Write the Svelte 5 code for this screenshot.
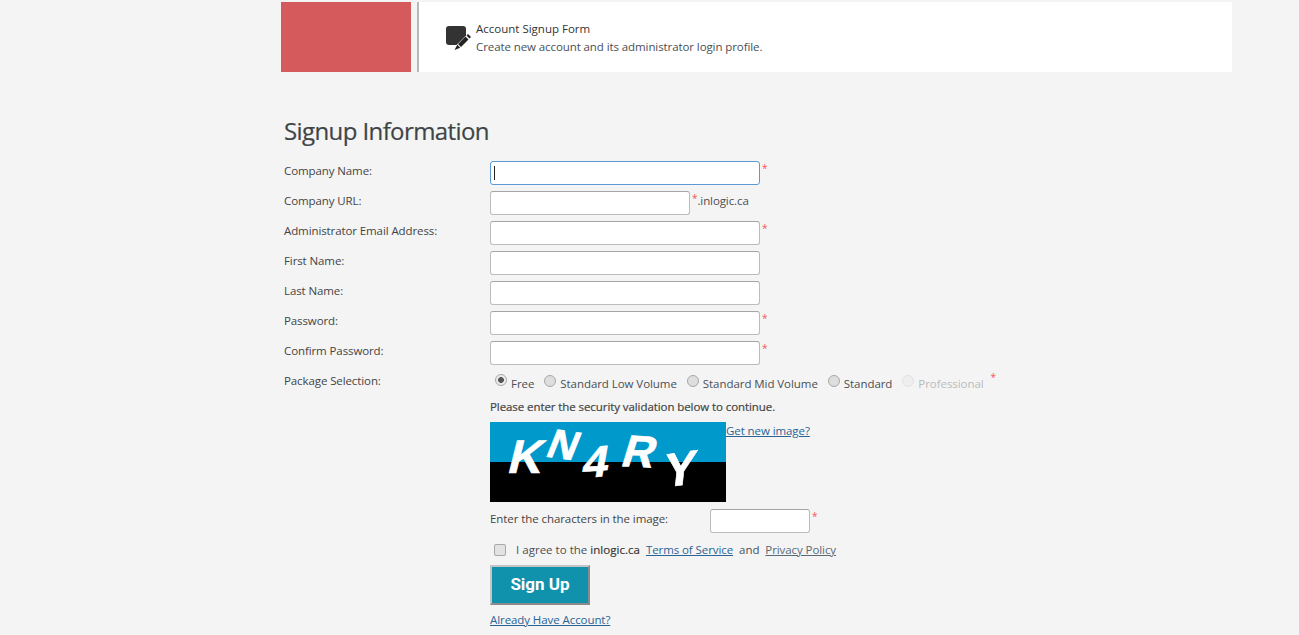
<script lang="ts">
  const fields = [
    { label: 'Company Name:', required: true, focus: true },
    { label: 'Company URL:', required: true, short: true, suffix: '.inlogic.ca' },
    { label: 'Administrator Email Address:', required: true },
    { label: 'First Name:' },
    { label: 'Last Name:' },
    { label: 'Password:', required: true, type: 'password' },
    { label: 'Confirm Password:', required: true, type: 'password' }
  ]

  const packages = [
    { name: 'Free', checked: true },
    { name: 'Standard Low Volume' },
    { name: 'Standard Mid Volume' },
    { name: 'Standard' },
    { name: 'Professional', disabled: true }
  ]

  const captcha = [
    { ch: 'K', x: 20, y: 11, size: 47, rot: 0, sx: 1 },
    { ch: 'N', x: 59, y: 3, size: 41, rot: 8, sx: 1 },
    { ch: '4', x: 94, y: 18, size: 44, rot: -4, sx: 1.05 },
    { ch: 'R', x: 134, y: 7, size: 45, rot: 3, sx: 1 },
    { ch: 'Y', x: 175, y: 23, size: 47, rot: -8, sx: 1.05 }
  ]
</script>

<div class="page">
  <header class="banner">
    <div class="logo"></div>
    <div class="title-box">
      <svg class="icon" width="26" height="26" viewBox="0 0 26 26" aria-hidden="true">
        <path d="M3 1h14a3 3 0 0 1 3 3v6.500l-9.500 9.500H3a3 3 0 0 1-3-3V4a3 3 0 0 1 3-3z" fill="#333" />
        <path d="M20.500 10.500l3 3 1.500-1.500-3-3zM19.500 11.500l3 3-7.500 7.500-3-3zM11.300 19.700l3 3-5.800 2.300z" fill="#222" />
      </svg>
      <div class="title-text">
        <div class="title">Account Signup Form</div>
        <div class="sub">Create new account and its administrator login profile.</div>
      </div>
    </div>
  </header>

  <main class="form">
    <h1>Signup Information</h1>

    {#each fields as f}
      <div class="row">
        <label for={f.label}>{f.label}</label>
        <div class="control">
          <span class="input-wrap">
            <input id={f.label} type={f.type ?? 'text'} class:short={f.short} class:focus={f.focus} />
            {#if f.focus}<span class="caret"></span>{/if}
          </span>
          {#if f.required}<span class="req">*</span>{/if}
          {#if f.suffix}<span class="suffix">{f.suffix}</span>{/if}
        </div>
      </div>
    {/each}

    <div class="row pkg-row">
      <span class="lbl">Package Selection:</span>
      <div class="packages">
        {#each packages as p}
          <span class="pkg" class:off={p.disabled}>
            <span class="radio" class:on={p.checked}></span>{p.name}
          </span>
        {/each}
        <span class="req pkg-req">*</span>
      </div>
    </div>

    <div class="indent">
      <p class="notice">Please enter the security validation below to continue.</p>
      <div class="captcha-row">
        <div class="captcha">
          {#each captcha as c}
            <span class="glyph" style="left:{c.x}px;top:{c.y}px;font-size:{c.size}px;transform:rotate({c.rot}deg) skewX(-14deg) scaleX({c.sx})">{c.ch}</span>
          {/each}
        </div>
        <a href="#new" class="new-image">Get new image?</a>
      </div>

      <div class="chars-row">
        <label for="chars">Enter the characters in the image:</label>
        <input id="chars" type="text" class="chars" />
        <span class="req">*</span>
      </div>

      <div class="agree">
        <span class="check"></span>
        <span class="agree-text">I agree to the <b>inlogic.ca</b></span>
        <a href="#tos">Terms of Service</a>
        <span>and</span>
        <a href="#privacy" class="muted">Privacy Policy</a>
      </div>

      <button type="button" class="signup">Sign Up</button>
      <a href="#login" class="have">Already Have Account?</a>
    </div>
  </main>
</div>

<style>
  :global(body) {
    background: #f4f4f4;
    font-family: "Open Sans", "Noto Sans", sans-serif;
    color: #444;
  }
  .page {
    width: 951px;
    height: 635px;
    margin-left: 281px;
    padding-top: 2px;
    box-sizing: border-box;
    overflow: hidden;
  }
  .banner {
    display: flex;
    height: 70px;
  }
  .logo {
    width: 130px;
    background: #d55a5c;
    margin-right: 6px;
  }
  .title-box {
    flex: 1;
    display: flex;
    align-items: center;
    gap: 5px;
    background: #fff;
    border-left: 2px solid #b5b9bb;
    padding-left: 27px;
  }
  .icon { margin-top: 1px; }
  .title-text { margin-top: 1px; margin-left: -1px; }
  .title {
    font-size: 11.5px;
    line-height: 18px;
    color: #333;
  }
  .sub {
    font-size: 11.5px;
    line-height: 17px;
    color: #4a4f55;
    letter-spacing: -0.09px;
  }
  .form { padding-left: 3px; }
  h1 {
    margin: 42px 0 0;
    height: 47px;
    font-size: 24px;
    line-height: 33px;
    font-weight: 400;
    color: #3f4547;
    letter-spacing: -0.6px;
    -webkit-text-stroke: 0.2px #3f4547;
  }
  .row {
    display: flex;
    height: 30px;
    font-size: 11.5px;
    letter-spacing: -0.1px;
  }
  .row label, .lbl {
    width: 206px;
    line-height: 20px;
    color: #444;
  }
  .control { display: flex; }
  .input-wrap { position: relative; display: block; }
  input {
    display: block;
    box-sizing: border-box;
    width: 270px;
    height: 24px;
    background: #fff;
    border: 1px solid #bcbcbc;
    border-top-color: #a5a5a5;
    border-radius: 3px;
    padding: 0 4px;
    outline: none;
  }
  input.short { width: 200px; }
  input.focus { border-color: #5b9bd5; }
  .caret {
    position: absolute;
    left: 4px;
    top: 5px;
    width: 1px;
    height: 14px;
    background: #222;
  }
  .req {
    color: #f0585c;
    font-size: 10px;
    line-height: 14px;
    margin-left: 2px;
  }
  .suffix {
    line-height: 20px;
    font-size: 11.5px;
    color: #4a4f55;
  }
  .pkg-row { height: 29px; }
  .packages {
    display: flex;
    margin-left: 5px;
    line-height: 20px;
    padding-top: 3px;
    height: 20px;
    letter-spacing: -0.06px;
  }
  .pkg {
    display: flex;
    margin-right: 10px;
    color: #4a4f55;
  }
  .pkg.off { color: #bbb; }
  .radio {
    box-sizing: border-box;
    width: 12px;
    height: 12px;
    margin: 1px 4px 0 0;
    border-radius: 50%;
    border: 1px solid #a8a8a8;
    background: #dedede;
  }
  .radio.on {
    background: radial-gradient(circle, #555 0 2.6px, #ececec 3.2px);
    margin-top: 0;
  }
  .off .radio {
    background: #eee;
    border-color: #e2e2e2;
  }
  .pkg-req { margin: -4px 0 0 -3px; }
  .indent {
    padding-left: 206px;
    font-size: 11.5px;
    letter-spacing: -0.08px;
  }
  .notice {
    margin: 0;
    height: 22px;
    line-height: 14px;
    color: #444;
    -webkit-text-stroke: 0.2px #444;
  }
  .captcha-row { display: flex; height: 80px; }
  .captcha {
    position: relative;
    width: 236px;
    height: 80px;
    overflow: hidden;
    background: linear-gradient(#0099cc 0 40px, #000 40px);
  }
  .glyph {
    position: absolute;
    font-family: "Liberation Sans", sans-serif;
    font-weight: 700;
    line-height: 1;
    color: #fff;
    letter-spacing: 0;
    -webkit-text-stroke: 0.6px #fff;
  }
  a {
    color: #2a6496;
    text-decoration: underline;
  }
  .new-image { line-height: 18px; }
  .chars-row {
    display: flex;
    height: 30px;
    padding-top: 7px;
  }
  .chars-row label {
    width: 220px;
    line-height: 20px;
    color: #444;
  }
  input.chars { width: 100px; }
  .agree {
    display: flex;
    align-items: center;
    height: 21px;
    margin-left: 4px;
    white-space: pre;
    color: #4a4f55;
  }
  .check {
    box-sizing: border-box;
    width: 12px;
    height: 12px;
    margin-right: 10px;
    border: 1px solid #a8a8a8;
    border-radius: 2px;
    background: #e2e2e2;
  }
  .agree-text { margin-right: 6px; letter-spacing: 0.02px; }
  .agree-text b { font-weight: 400; color: #333; -webkit-text-stroke: 0.15px #333; }
  .agree span + a { margin-right: 6px; }
  .agree a.muted { color: #5a6a78; margin: 0 0 0 6px; }
  .signup {
    display: block;
    box-sizing: border-box;
    width: 100px;
    height: 40px;
    margin-top: 5px;
    background: #1092ad;
    border: 2px solid;
    border-color: #c5c5c5 #8a8a8a #8a8a8a #c5c5c5;
    color: #fff;
    font-family: Roboto, sans-serif;
    font-weight: 700;
    font-size: 17px;
    padding-bottom: 3px;
  }
  .have {
    display: inline-block;
    margin-top: 6px;
    line-height: 18px;
  }
</style>
